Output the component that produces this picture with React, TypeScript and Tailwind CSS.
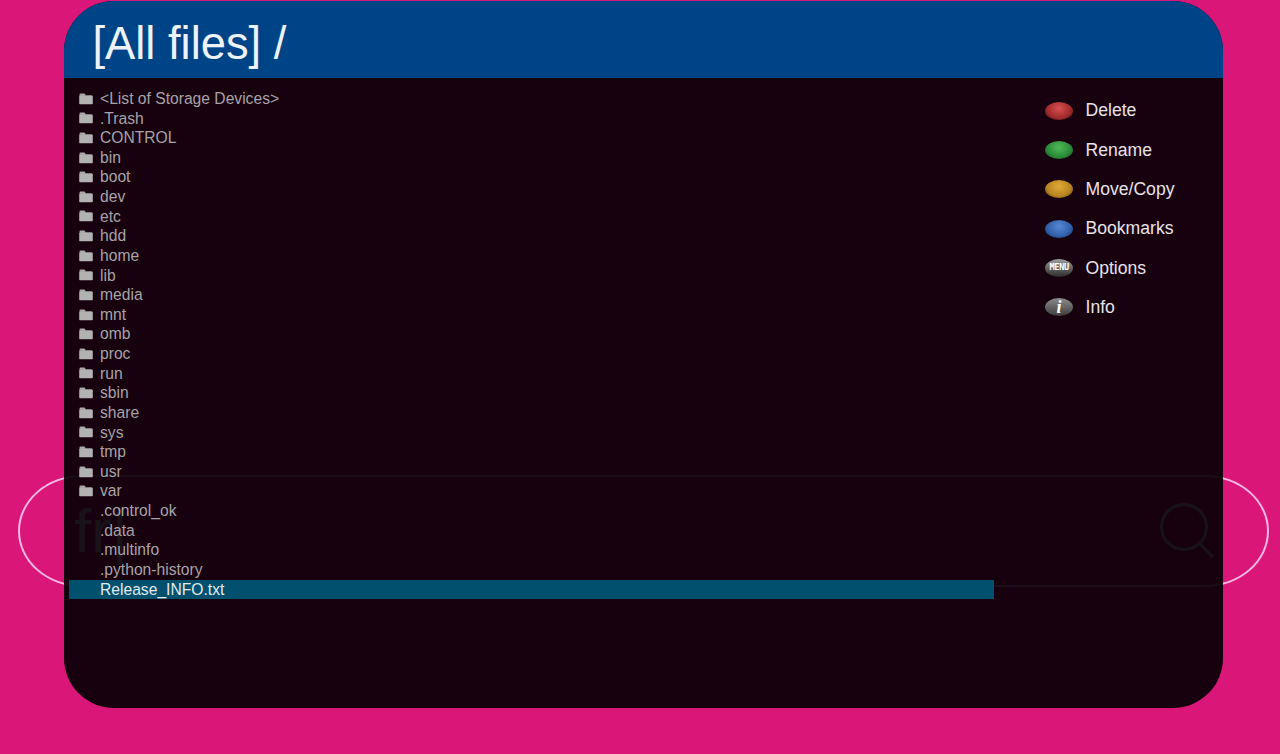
const folders = [
  '<List of Storage Devices>', '.Trash', 'CONTROL', 'bin', 'boot', 'dev', 'etc', 'hdd', 'home', 'lib', 'media',
  'mnt', 'omb', 'proc', 'run', 'sbin', 'share', 'sys', 'tmp', 'usr', 'var',
];
const files = ['.control_ok', '.data', '.multinfo', '.python-history'];

function FolderIcon() {
  return (
    <svg className="w-[14px] h-[12px] shrink-0" viewBox="0 0 14 12">
      <path d="M0.5 3.2 V1.6 Q0.5 0.6 1.5 0.6 H5 Q6 0.6 6.3 1.6 L6.5 2.2 H12.5 Q13.5 2.2 13.5 3.2 Z" fill="#a8a8a8" />
      <path d="M0.2 3.1 H13.8 V10.6 Q13.8 11.2 13 11.2 H1 Q0.2 11.2 0.2 10.6 Z" fill="#b2b2b2" />
    </svg>
  );
}

function FileRow({ name, folder }: { name: string; folder?: boolean }) {
  return (
    <div className="flex items-center h-[19.64px] pl-[10px] text-[#a8a3a7]">
      <div className="w-[14px] mr-[7px] flex items-center">{folder && <FolderIcon />}</div>
      <span className="whitespace-pre">{name}</span>
    </div>
  );
}

function KeyRow({ label, children }: { label: string; children: React.ReactNode }) {
  return (
    <div className="flex items-center h-[39.35px]">
      <div className="w-[28px] h-[18px] mr-[12.5px] shrink-0">{children}</div>
      <span>{label}</span>
    </div>
  );
}

export default function App() {
  return (
    <div className="relative w-full h-[754px] overflow-hidden bg-[#da1778] pt-px pl-[64px] font-['Liberation_Sans',Arial,sans-serif]">
      {/* search bar sits behind the translucent panel */}
      <div className="absolute left-[18px] top-[475px] w-[1251px] h-[112px] rounded-[64px/56px] border-[2.5px] border-[#ffb8e6] flex items-center justify-between text-white">
        <span className="ml-[54px] text-[62px] leading-none">fr|</span>
        <svg className="w-[56px] h-[56px] mr-[52px]" viewBox="0 0 56 56" fill="none" stroke="currentColor" strokeWidth="3">
          <circle cx="25" cy="24" r="22.5" />
          <path d="M41 41 L54 54" />
        </svg>
      </div>

      <div className="relative w-[1159px] h-[707px] rounded-[50px] overflow-hidden flex flex-col bg-[rgba(8,0,6,0.93)]">
        <div className="h-[77px] shrink-0 bg-[#004488] pl-[28.5px] flex items-center text-[45.3px] text-[#eef3fb]">
          <span className="mt-[8px]">[All files] /</span>
        </div>
        <div className="flex flex-1 min-h-0">
          <div className="w-[930px] pl-[5px] pt-[10.9px] text-[15.65px]">
            {folders.map((name) => (
              <FileRow key={name} name={name} folder />
            ))}
            {files.map((name) => (
              <FileRow key={name} name={name} />
            ))}
            <div className="flex items-center h-[19.64px] pl-[31px] bg-[#00506e] text-[#e4eaee]">Release_INFO.txt</div>
          </div>
          <div className="ml-[51px] pt-[12.9px] text-[17.6px] text-[#e8e3e7]">
            <KeyRow label="Delete">
              <div className="w-full h-full rounded-[50%] bg-[radial-gradient(ellipse_at_50%_35%,#d85050,#a02a2c_60%,#3a0c10)]" />
            </KeyRow>
            <KeyRow label="Rename">
              <div className="w-full h-full rounded-[50%] bg-[radial-gradient(ellipse_at_50%_35%,#50b858,#2a8a38_60%,#0c3614)]" />
            </KeyRow>
            <KeyRow label="Move/Copy">
              <div className="w-full h-full rounded-[50%] bg-[radial-gradient(ellipse_at_50%_35%,#e0aa38,#b88420_60%,#46300a)]" />
            </KeyRow>
            <KeyRow label="Bookmarks">
              <div className="w-full h-full rounded-[50%] bg-[radial-gradient(ellipse_at_50%_35%,#5a88d0,#3060ac_60%,#102448)]" />
            </KeyRow>
            <KeyRow label="Options">
              <div className="w-full h-full rounded-[50%] bg-[linear-gradient(#a0a0a0,#2a2a2a)] flex items-center justify-center">
                <span className="text-[9px] leading-none font-bold text-white font-['DejaVu_Sans_Mono',monospace] scale-x-95 tracking-[-0.3px]">MENU</span>
              </div>
            </KeyRow>
            <KeyRow label="Info">
              <div className="w-full h-full rounded-[50%] bg-[linear-gradient(#8c8c8c,#3c3c3c)] flex items-center justify-center">
                <span className="text-[18px] leading-none font-bold italic text-white font-['Liberation_Serif',serif]">i</span>
              </div>
            </KeyRow>
          </div>
        </div>
      </div>
    </div>
  );
}
